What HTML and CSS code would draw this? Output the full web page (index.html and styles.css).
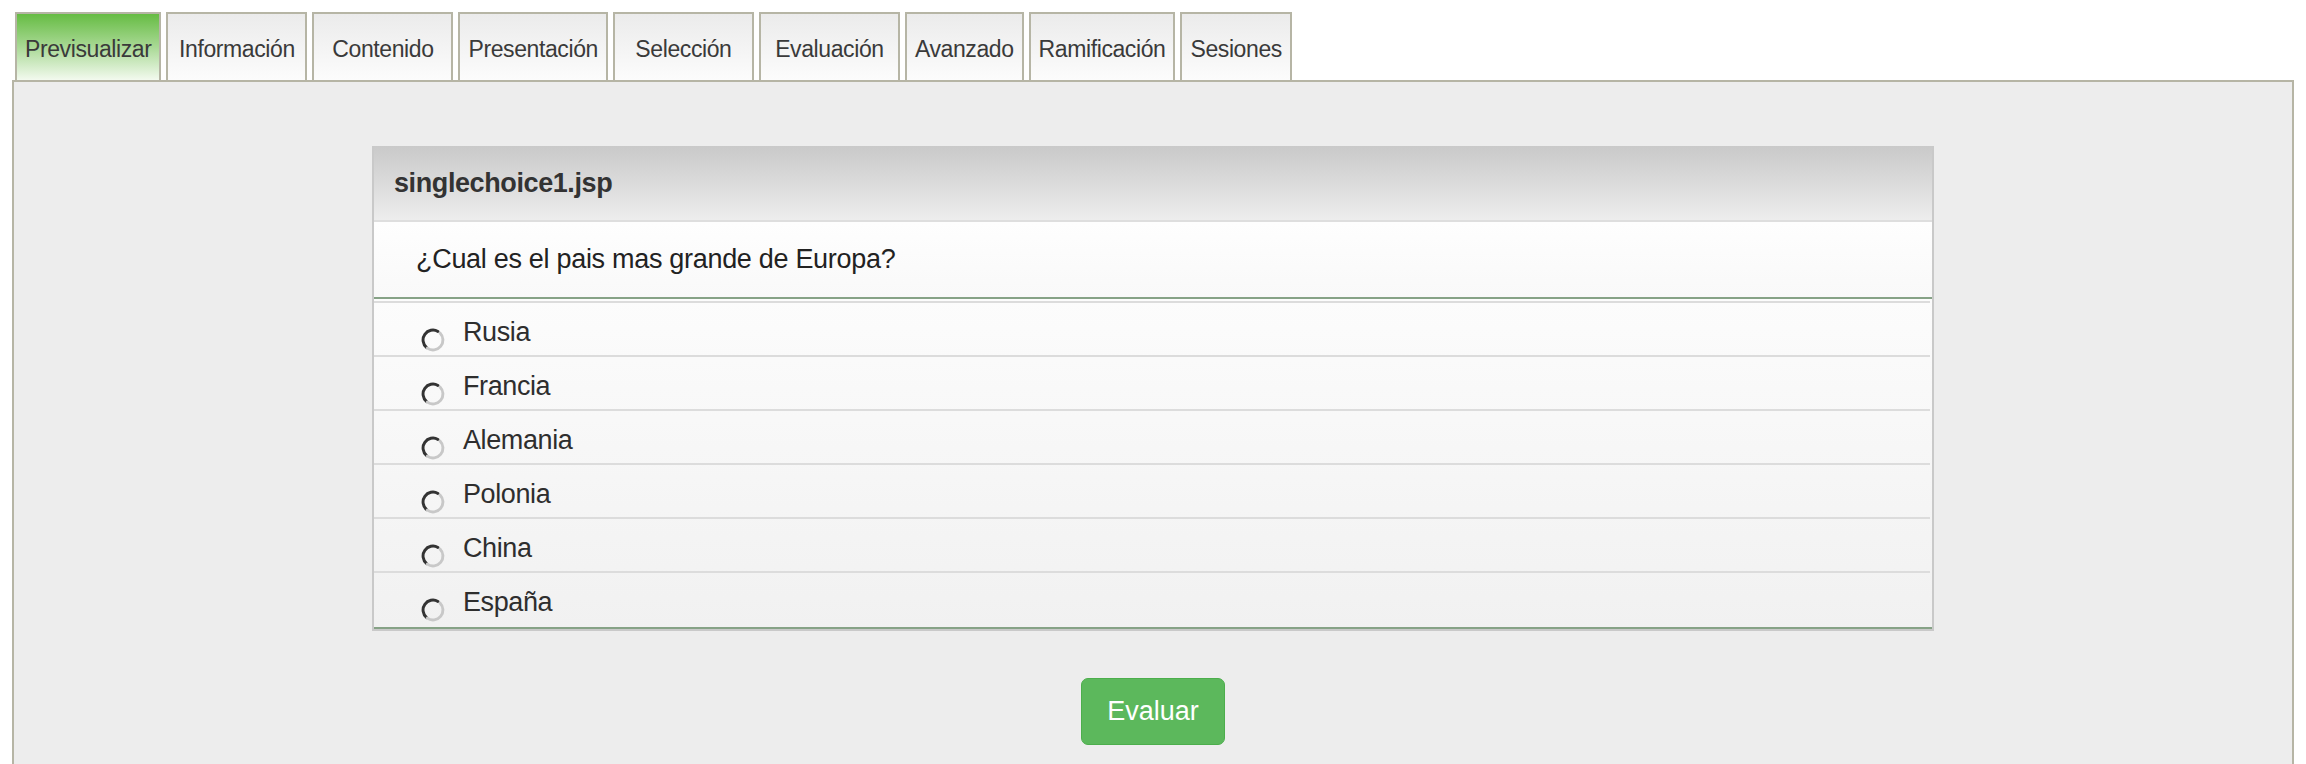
FILE: index.html
```html
<!DOCTYPE html>
<html>

<head>
    <title>Previsualizar pregunta</title>
    <link rel="stylesheet" href="styles.css">
</head>

<body>
    <div class="page">
        <ul class="tabs">
            <li class="tab active">Previsualizar</li>
            <li class="tab fixed">Información</li>
            <li class="tab fixed">Contenido</li>
            <li class="tab">Presentación</li>
            <li class="tab fixed">Selección</li>
            <li class="tab fixed">Evaluación</li>
            <li class="tab">Avanzado</li>
            <li class="tab">Ramificación</li>
            <li class="tab">Sesiones</li>
        </ul>

        <div class="tab-panel">
            <div class="question-box">
                <div class="question-title">singlechoice1.jsp</div>
                <div class="question-text">¿Cual es el pais mas grande de Europa?</div>
                <ul class="answers">
                    <li><svg class="radio" viewBox="0 0 23 23"><path class="radio-dark" d="M16.25 3.27 A9.5 9.5 0 0 0 5.39 18.78"/><path class="radio-light" d="M6.05 19.28 A9.5 9.5 0 0 0 18.22 4.78"/></svg><span>Rusia</span></li>
                    <li><svg class="radio" viewBox="0 0 23 23"><path class="radio-dark" d="M16.25 3.27 A9.5 9.5 0 0 0 5.39 18.78"/><path class="radio-light" d="M6.05 19.28 A9.5 9.5 0 0 0 18.22 4.78"/></svg><span>Francia</span></li>
                    <li><svg class="radio" viewBox="0 0 23 23"><path class="radio-dark" d="M16.25 3.27 A9.5 9.5 0 0 0 5.39 18.78"/><path class="radio-light" d="M6.05 19.28 A9.5 9.5 0 0 0 18.22 4.78"/></svg><span>Alemania</span></li>
                    <li><svg class="radio" viewBox="0 0 23 23"><path class="radio-dark" d="M16.25 3.27 A9.5 9.5 0 0 0 5.39 18.78"/><path class="radio-light" d="M6.05 19.28 A9.5 9.5 0 0 0 18.22 4.78"/></svg><span>Polonia</span></li>
                    <li><svg class="radio" viewBox="0 0 23 23"><path class="radio-dark" d="M16.25 3.27 A9.5 9.5 0 0 0 5.39 18.78"/><path class="radio-light" d="M6.05 19.28 A9.5 9.5 0 0 0 18.22 4.78"/></svg><span>China</span></li>
                    <li><svg class="radio" viewBox="0 0 23 23"><path class="radio-dark" d="M16.25 3.27 A9.5 9.5 0 0 0 5.39 18.78"/><path class="radio-light" d="M6.05 19.28 A9.5 9.5 0 0 0 18.22 4.78"/></svg><span>España</span></li>
                </ul>
            </div>

            <div class="actions">
                <button class="btn-evaluar">Evaluar</button>
            </div>
        </div>
    </div>
</body>

</html>
```

FILE: styles.css
```css
body {
    font-family: "Liberation Sans", Arial, sans-serif;
    background-color: #fff;
    color: #333;
    margin: 0;
    padding: 0;
}

.page {
    padding: 12px 12px 0 12px;
}

/* tab strip */
.tabs {
    display: flex;
    gap: 5px;
    list-style: none;
    margin: 0 0 0 3px;
    padding: 0;
}

.tab {
    box-sizing: border-box;
    height: 68px;
    padding: 4px 8px 0 8px;
    line-height: 62px;
    text-align: center;
    font-size: 23px;
    letter-spacing: -0.4px;
    color: #3a3a3a;
    border: 2px solid #b6b5a5;
    border-bottom: none;
    background: linear-gradient(#ebebeb, #fcfcfc);
}

.tab.fixed {
    width: 141px;
}

.tab.active {
    background: linear-gradient(#66bc43, #a9d995 50%, #f3faef);
}

/* panel under the tabs */
.tab-panel {
    background-color: #ededed;
    border: 2px solid #b6b5a5;
    padding: 64px 0 60px 0;
    min-height: 700px;
}

.question-box {
    width: 1562px;
    margin: 0 auto;
    box-sizing: border-box;
    border: 2px solid #c9c9c9;
    border-top: none;
}

.question-title {
    height: 74px;
    line-height: 74px;
    padding-left: 20px;
    font-size: 27px;
    font-weight: bold;
    letter-spacing: -0.4px;
    color: #333;
    background: linear-gradient(#c9c9c9, #ededed);
    border-bottom: 2px solid #dedede;
}

.question-text {
    height: 75px;
    line-height: 75px;
    padding-left: 42px;
    font-size: 27px;
    letter-spacing: -0.3px;
    color: #222;
    background: linear-gradient(#fefefe, #f9f9f9);
    border-bottom: 2px solid #86a286;
}

.answers {
    list-style: none;
    margin: 0;
    padding: 2px 2px 2px 0;
    background: linear-gradient(#fcfcfc, #f1f1f1);
    border-bottom: 2px solid #86a286;
}

.answers li {
    display: flex;
    align-items: flex-start;
    height: 52px;
    padding-left: 47px;
    border-top: 2px solid #dcdcdc;
}

.answers span {
    padding-top: 7px;
    line-height: 44px;
    font-size: 27px;
    letter-spacing: -0.4px;
    color: #2e2e2e;
}

.radio {
    width: 24px;
    height: 24px;
    margin-top: 25px;
    margin-right: 18px;
    flex-shrink: 0;
}

.radio path {
    fill: none;
    stroke-width: 2.8;
    stroke-linecap: round;
}

.radio-dark {
    stroke: #333;
}

.radio-light {
    stroke: #c8c8c8;
}

.actions {
    text-align: center;
    margin-top: 47px;
}

.btn-evaluar {
    box-sizing: border-box;
    height: 67px;
    padding: 0 25px;
    font-family: "Liberation Sans", Arial, sans-serif;
    font-size: 27px;
    color: #fff;
    background-color: #5cb85c;
    border: 1px solid #4cae4c;
    border-radius: 7px;
    cursor: pointer;
}
```
